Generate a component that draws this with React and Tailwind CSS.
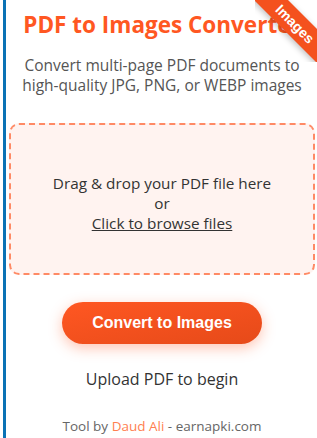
import React from "react";

export default function App() {
  return (
    <div className="relative w-[317px] h-[438px] overflow-hidden bg-white pl-[3px] font-['Open_Sans',sans-serif]">
      <div className="h-full w-[315px] border-l-[3px] border-[#0a72b5] bg-white pl-[3px]">
        <div className="w-[306px]">
          <h1 className="pt-[8px] text-center text-[22.5px] font-bold leading-[34px] text-[#ff5722] whitespace-nowrap">
            PDF to Images Converter
          </h1>
          <p className="mt-[13px] text-center text-[15.5px] leading-[20px] text-[#555]">
            Convert multi-page PDF documents to
            <br />
            high-quality JPG, PNG, or WEBP images
          </p>
          <div className="mt-[28px] flex h-[152px] flex-col items-center justify-center rounded-[10px] border-2 border-dashed border-[#ff8a65] bg-[#fff3f0] pt-[8px] text-[15.3px] leading-[20px] text-[#333]">
            <span>Drag &amp; drop your PDF file here</span>
            <span>or</span>
            <span className="underline">Click to browse files</span>
          </div>
          <div className="mt-[27px] flex justify-center">
            <button className="h-[42px] w-[200px] rounded-full bg-gradient-to-br from-[#ff5722] to-[#e64a19] font-['Liberation_Sans',sans-serif] text-[16px] font-bold text-white shadow-[0_4px_14px_rgba(255,87,34,0.35)]">
              Convert to Images
            </button>
          </div>
          <p className="mt-[23px] text-center text-[16px] leading-[24px] text-[#333]">
            Upload PDF to begin
          </p>
          <p className="mt-[25px] text-center text-[13.5px] leading-[20px] text-[#666]">
            Tool by <span className="text-[#ff7f50]">Daud Ali</span> - earnapki.com
          </p>
        </div>
      </div>
      <div className="absolute right-0 top-0 h-[62px] w-[62px] overflow-hidden">
        <div className="absolute left-[-12px] top-[12px] flex h-[24px] w-[104px] rotate-45 items-center justify-center bg-[#f4511e] font-['Liberation_Sans',sans-serif] text-[14px] font-bold text-white shadow-[0_2px_6px_rgba(0,0,0,0.25)]">
          Images
        </div>
      </div>
    </div>
  );
}
